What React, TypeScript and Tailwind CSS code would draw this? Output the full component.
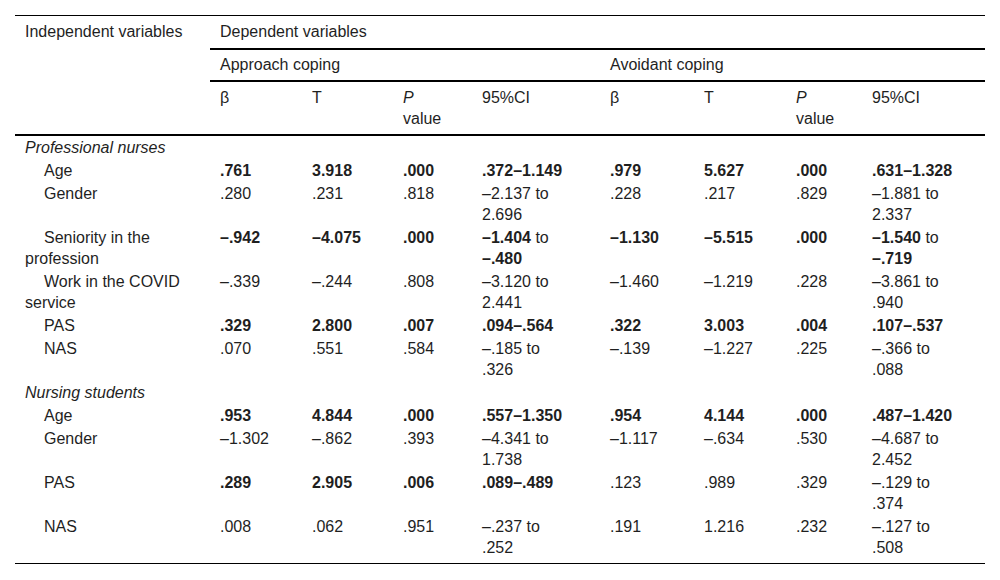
type Cell = string | { b: string } | (string | { b: string } | null)[];

type Row = { label: string[]; cells: Cell[] };

const B = (s: string) => ({ b: s });

const nurses: Row[] = [
  {
    label: ["Age"],
    cells: [B(".761"), B("3.918"), B(".000"), B(".372–1.149"), B(".979"), B("5.627"), B(".000"), B(".631–1.328")],
  },
  {
    label: ["Gender"],
    cells: [".280", ".231", ".818", ["–2.137 to", null, "2.696"], ".228", ".217", ".829", ["–1.881 to", null, "2.337"]],
  },
  {
    label: ["Seniority in the", "profession"],
    cells: [
      B("–.942"),
      B("–4.075"),
      B(".000"),
      [B("–1.404"), " to", null, B("–.480")],
      B("–1.130"),
      B("–5.515"),
      B(".000"),
      [B("–1.540"), " to", null, B("–.719")],
    ],
  },
  {
    label: ["Work in the COVID", "service"],
    cells: ["–.339", "–.244", ".808", ["–3.120 to", null, "2.441"], "–1.460", "–1.219", ".228", ["–3.861 to", null, ".940"]],
  },
  {
    label: ["PAS"],
    cells: [B(".329"), B("2.800"), B(".007"), B(".094–.564"), B(".322"), B("3.003"), B(".004"), B(".107–.537")],
  },
  {
    label: ["NAS"],
    cells: [".070", ".551", ".584", ["–.185 to", null, ".326"], "–.139", "–1.227", ".225", ["–.366 to", null, ".088"]],
  },
];

const students: Row[] = [
  {
    label: ["Age"],
    cells: [B(".953"), B("4.844"), B(".000"), B(".557–1.350"), B(".954"), B("4.144"), B(".000"), B(".487–1.420")],
  },
  {
    label: ["Gender"],
    cells: ["–1.302", "–.862", ".393", ["–4.341 to", null, "1.738"], "–1.117", "–.634", ".530", ["–4.687 to", null, "2.452"]],
  },
  {
    label: ["PAS"],
    cells: [B(".289"), B("2.905"), B(".006"), [B(".089–.489"), null, "\u00a0"], ".123", ".989", ".329", ["–.129 to", null, ".374"]],
  },
  {
    label: ["NAS"],
    cells: [".008", ".062", ".951", ["–.237 to", null, ".252"], ".191", "1.216", ".232", ["–.127 to", null, ".508"]],
  },
];

const renderPart = (p: string | { b: string } | null, i: number) => {
  if (p === null) return <br key={i} />;
  if (typeof p === "string") return <span key={i}>{p}</span>;
  return (
    <strong key={i} className="font-bold">
      {p.b}
    </strong>
  );
};

const renderCell = (c: Cell) => {
  if (Array.isArray(c)) return c.map(renderPart);
  return renderPart(c, 0);
};

const td = "px-[10px] py-px align-top whitespace-nowrap";

function Group({ title, rows, last }: { title: string; rows: Row[]; last?: boolean }) {
  return (
    <>
      <tr>
        <td colSpan={9} className={`${td} italic`}>
          {title}
        </td>
      </tr>
      {rows.map((r, ri) => {
        const isLast = last && ri === rows.length - 1;
        const cls = `${td} ${isLast ? "pb-[5px] border-b border-black" : ""}`;
        return (
          <tr key={ri}>
            <td className={`${cls} indent-[19px]`}>
              {r.label.map((l, i) => (
                <span key={i}>
                  {i > 0 && <br />}
                  {l}
                </span>
              ))}
            </td>
            {r.cells.map((c, ci) => (
              <td key={ci} className={cls}>
                {renderCell(c)}
              </td>
            ))}
          </tr>
        );
      })}
    </>
  );
}

export default function App() {
  const th = "px-[10px] py-[5px] align-top text-left font-normal whitespace-nowrap";
  return (
    <div className="w-[1000px] h-[580px] bg-white pt-[15px] px-[15px] font-['Liberation_Sans',Arial,sans-serif] text-[16px] leading-[21px] text-[#1f1f1f]">
      <table className="table-fixed border-separate border-spacing-0 w-[970px]">
        <colgroup>
          <col className="w-[195px]" />
          <col className="w-[92px]" />
          <col className="w-[91px]" />
          <col className="w-[79px]" />
          <col className="w-[128px]" />
          <col className="w-[94px]" />
          <col className="w-[92px]" />
          <col className="w-[76px]" />
          <col className="w-[123px]" />
        </colgroup>
        <thead>
          <tr>
            <th rowSpan={3} className={`${th} border-t border-b-2 border-black`}>
              Independent variables
            </th>
            <th colSpan={8} className={`${th} border-t border-b-2 border-black pb-[6px]`}>
              Dependent variables
            </th>
          </tr>
          <tr>
            <th colSpan={4} className={`${th} border-b-2 border-black pt-[4px] pb-[5px]`}>
              Approach coping
            </th>
            <th colSpan={4} className={`${th} border-b-2 border-black pt-[4px] pb-[5px]`}>
              Avoidant coping
            </th>
          </tr>
          <tr>
            {[0, 1].map((k) => [
              <th key={`b${k}`} className={`${th} border-b-2 border-black`}>
                β
              </th>,
              <th key={`t${k}`} className={`${th} border-b-2 border-black`}>
                T
              </th>,
              <th key={`p${k}`} className={`${th} border-b-2 border-black`}>
                <i>P</i>
                <br />
                value
              </th>,
              <th key={`c${k}`} className={`${th} border-b-2 border-black`}>
                95%CI
              </th>,
            ])}
          </tr>
        </thead>
        <tbody>
          <Group title="Professional nurses" rows={nurses} />
          <Group title="Nursing students" rows={students} last />
        </tbody>
      </table>
    </div>
  );
}
